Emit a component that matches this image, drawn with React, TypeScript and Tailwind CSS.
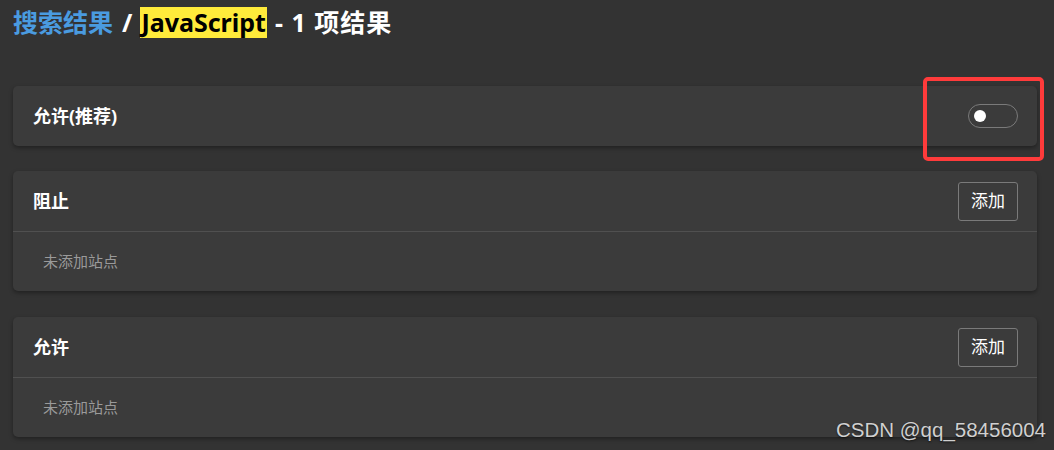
import React from 'react';

const cjk = '"Segoe UI", "Noto Sans", "Noto Sans CJK SC", sans-serif';

function Toggle() {
  return (
    <div className="w-[50px] h-[24px] rounded-full border border-[#7a7a7a] flex items-center px-[5px]">
      <div className="w-[12px] h-[12px] rounded-full bg-white" />
    </div>
  );
}

function SiteList({ title }: { title: string }) {
  return (
    <div className="rounded-[5px] bg-[#3b3b3b] shadow-[0_2px_4px_rgba(0,0,0,0.35)]">
      <div className="h-[61px] flex items-center justify-between pl-[20px] pr-[19px] border-b border-[#505050]">
        <span className="text-[18px] font-bold text-white">{title}</span>
        <button className="w-[60px] h-[39px] rounded-[3px] border border-[#7a7a7a] text-[17px] text-white">
          添加
        </button>
      </div>
      <div className="h-[59px] flex items-center pl-[30px] text-[15px] text-[#9a9a9a]">未添加站点</div>
    </div>
  );
}

export default function App() {
  return (
    <div
      className="relative w-[1054px] h-[450px] overflow-hidden bg-[#333333] px-[13px] pt-[7px]"
      style={{ fontFamily: cjk }}
    >
      <h1 className="text-[25px] leading-[31px] font-bold text-white flex items-center">
        <span className="text-[#4a9be0]">搜索结果</span>
        <span className="ml-[9px]">/</span>
        <span className="ml-[8px] px-[1px] bg-[#ffeb3b] text-black">JavaScript</span>
        <span className="ml-[8px] tracking-[1px]">- 1 项结果</span>
      </h1>

      <div className="mt-[48px] flex flex-col gap-[25px] w-[1024px]">
        <div className="h-[60px] rounded-[5px] bg-[#3b3b3b] shadow-[0_2px_4px_rgba(0,0,0,0.35)] flex items-center justify-between pl-[20px] pr-[19px]">
          <span className="text-[18px] font-bold text-white">允许(推荐)</span>
          <Toggle />
        </div>
        <SiteList title="阻止" />
        <div className="mt-[1px]">
          <SiteList title="允许" />
        </div>
      </div>

      {/* highlight box drawn over the toggle */}
      <div className="absolute left-[923px] top-[77px] w-[121px] h-[84px] rounded-[5px] border-[4px] border-[#ff3b3b]" />

      <div
        className="absolute left-[836px] top-[418px] text-[20.5px] leading-[24px] text-[#d0d0d0] [text-shadow:0_1px_2px_rgba(0,0,0,0.6)]"
        style={{ fontFamily: '"Liberation Sans", Arial, sans-serif' }}
      >
        CSDN @qq_58456004
      </div>
    </div>
  );
}
